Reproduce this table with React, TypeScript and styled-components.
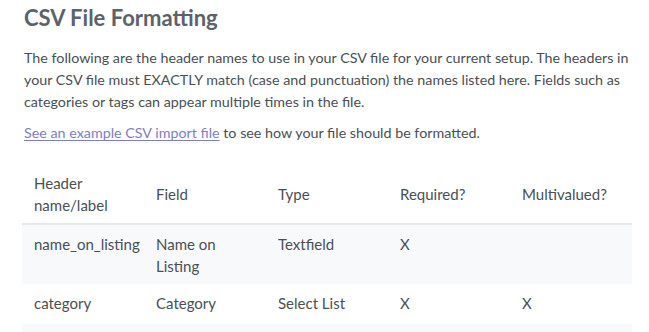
import React from "react";
import styled, { createGlobalStyle } from "styled-components";

const Global = createGlobalStyle`
  html, body { margin: 0; padding: 0; background: #ffffff; }
  body { font-family: Lato, "Noto Sans", sans-serif; color: #4a4f55; }
`;

const Page = styled.div`
  padding: 0 17px 0 22px;
`;

const Title = styled.h2`
  margin: 0;
  padding: 4px 0 0 2px;
  font-size: 22px;
  line-height: 28px;
  font-weight: 700;
  color: #5c6269;
`;

const Para = styled.p<{ $mt?: number; $mb?: number }>`
  margin: ${(p) => p.$mt ?? 0}px 0 ${(p) => p.$mb ?? 0}px 0;
  padding-left: 2px;
  width: 606px;
  font-size: 14.3px;
  line-height: 22px;
  color: #4a4f55;
`;

const Link = styled.a`
  color: #7c80c4;
  text-decoration: underline;
  text-underline-offset: 2px;
`;

const Table = styled.table`
  width: 610px;
  border-collapse: collapse;
  table-layout: fixed;
  margin-top: 20px;
  font-size: 15px;
  line-height: 22px;
`;

const HeadCell = styled.th`
  text-align: left;
  font-weight: 400;
  vertical-align: middle;
  padding: 8px 12px 7px;
  border-bottom: 2px solid #e6e8eb;
  color: #4a4f55;
`;

const Row = styled.tr<{ $striped?: boolean }>`
  height: 40px;
  background: ${(p) => (p.$striped ? "#f8f9fb" : "#ffffff")};
`;

const Cell = styled.td`
  vertical-align: top;
  padding: 8px 12px 7px;
  color: #4a4f55;
`;

const rows = [
  ["name_on_listing", "Name on Listing", "Textfield", "X", ""],
  ["category", "Category", "Select List", "X", "X"],
  ["", "", "", "", ""],
];

export default function App() {
  return (
    <>
      <Global />
      <Page>
        <Title>CSV File Formatting</Title>
        <Para $mt={15} $mb={9}>
          The following are the header names to use in your CSV file for your current setup. The headers in
          your CSV file must EXACTLY match (case and punctuation) the names listed here. Fields such as
          categories or tags can appear multiple times in the file.
        </Para>
        <Para>
          <Link href="#">See an example CSV import file</Link> to see how your file should be formatted.
        </Para>
        <Table>
          <thead>
            <tr>
              <HeadCell>Header name/label</HeadCell>
              <HeadCell>Field</HeadCell>
              <HeadCell>Type</HeadCell>
              <HeadCell>Required?</HeadCell>
              <HeadCell>Multivalued?</HeadCell>
            </tr>
          </thead>
          <tbody>
            {rows.map((r, i) => (
              <Row key={i} $striped={i % 2 === 0}>
                {r.map((c, j) => (
                  <Cell key={j}>{c || "\u00a0"}</Cell>
                ))}
              </Row>
            ))}
          </tbody>
        </Table>
      </Page>
    </>
  );
}
